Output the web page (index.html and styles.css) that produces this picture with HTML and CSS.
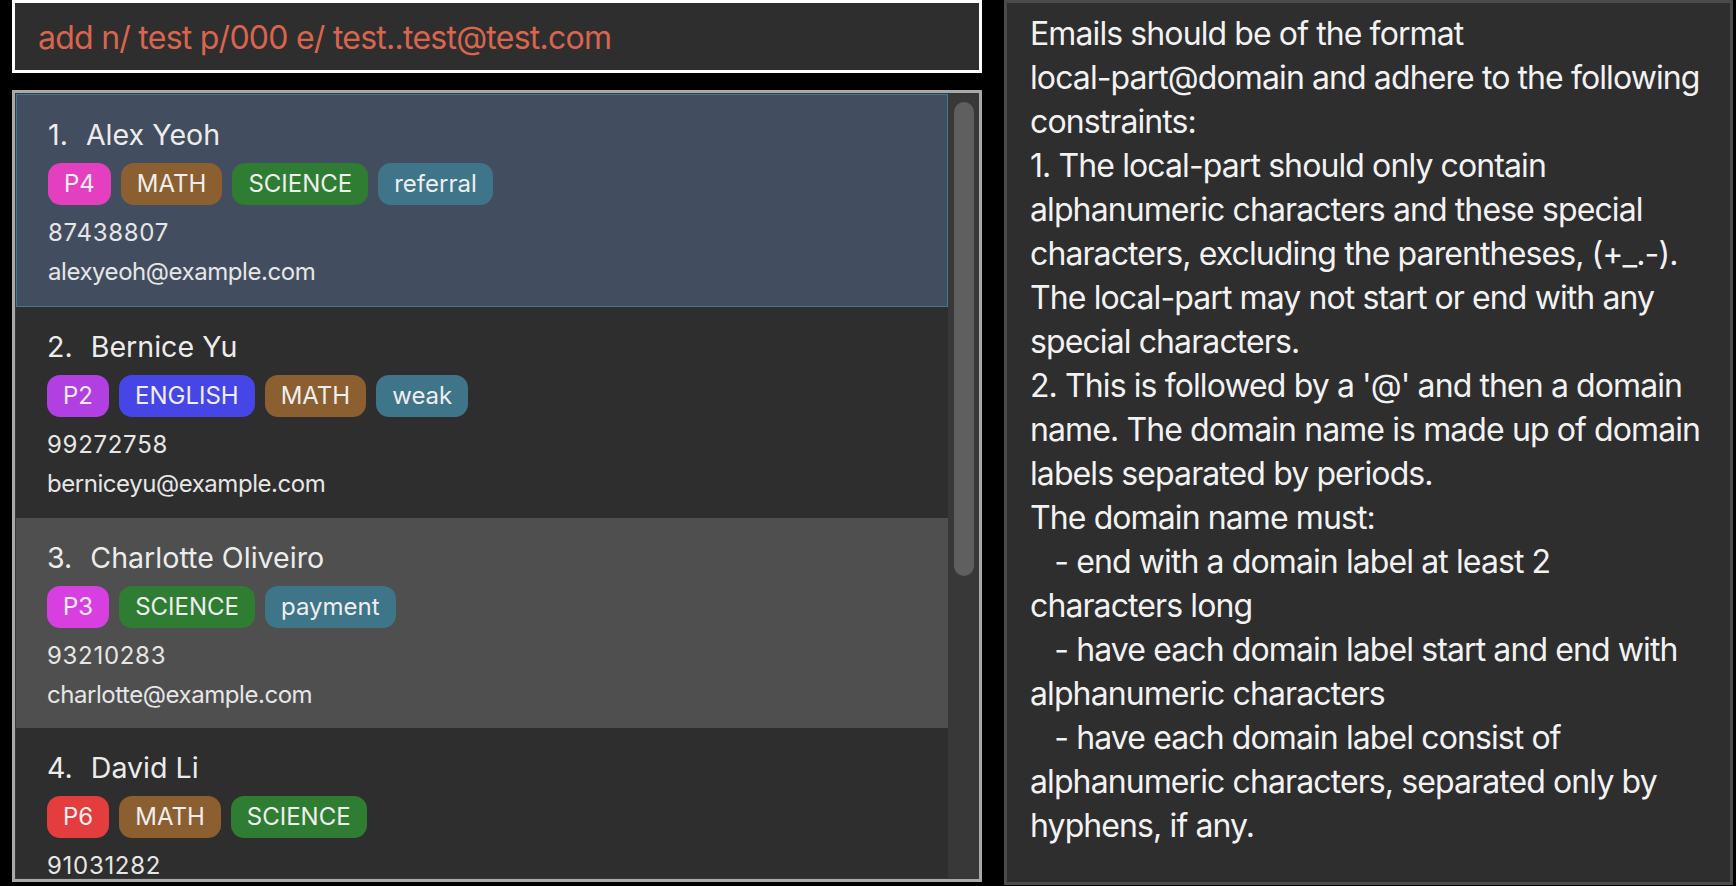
FILE: index.html
```html
<!DOCTYPE html>
<html lang="en">
<head>
<meta charset="utf-8">
<title>Address Book</title>
<link rel="stylesheet" href="styles.css">
</head>
<body>
<div class="app">
  <div class="left">
    <div class="command-box">
      <span class="command-text">add n/ test p/000 e/ test..test@test.com</span>
    </div>
    <div class="list-panel">
      <div class="list">
        <div class="cell selected">
          <div class="name"><span class="idx">1.</span>Alex Yeoh</div>
          <div class="tags">
            <span class="tag t-p4">P4</span>
            <span class="tag t-math">MATH</span>
            <span class="tag t-science">SCIENCE</span>
            <span class="tag t-note">referral</span>
          </div>
          <div class="line phone">87438807</div>
          <div class="line email">alexyeoh@example.com</div>
        </div>
        <div class="cell">
          <div class="name"><span class="idx">2.</span>Bernice Yu</div>
          <div class="tags">
            <span class="tag t-p2">P2</span>
            <span class="tag t-english">ENGLISH</span>
            <span class="tag t-math">MATH</span>
            <span class="tag t-note">weak</span>
          </div>
          <div class="line phone">99272758</div>
          <div class="line email">berniceyu@example.com</div>
        </div>
        <div class="cell hover">
          <div class="name"><span class="idx">3.</span>Charlotte Oliveiro</div>
          <div class="tags">
            <span class="tag t-p3">P3</span>
            <span class="tag t-science">SCIENCE</span>
            <span class="tag t-note">payment</span>
          </div>
          <div class="line phone">93210283</div>
          <div class="line email">charlotte@example.com</div>
        </div>
        <div class="cell">
          <div class="name"><span class="idx">4.</span>David Li</div>
          <div class="tags">
            <span class="tag t-p6">P6</span>
            <span class="tag t-math">MATH</span>
            <span class="tag t-science">SCIENCE</span>
          </div>
          <div class="line phone">91031282</div>
        </div>
      </div>
      <div class="scroll-track"><div class="scroll-thumb"></div></div>
    </div>
  </div>
  <div class="result-panel">
<p class="result-text">Emails should be of the format
local-part@domain and adhere to the following
constraints:
1. The local-part should only contain
alphanumeric characters and these special
characters, excluding the parentheses, (+_.-).
The local-part may not start or end with any
special characters.
2. This is followed by a '@' and then a domain
name. The domain name is made up of domain
labels separated by periods.
The domain name must:
   - end with a domain label at least 2
characters long
   - have each domain label start and end with
alphanumeric characters
   - have each domain label consist of
alphanumeric characters, separated only by
hyphens, if any.</p>
  </div>
</div>
</body>
</html>
```

FILE: styles.css
```css
* {
  box-sizing: border-box;
}

html, body {
  margin: 0;
  padding: 0;
  background: #000;
  height: 886px;
  overflow: hidden;
}

body {
  font-family: Inter, "Noto Sans", sans-serif;
  color: #ececec;
}

.app {
  display: flex;
  padding-left: 12px;
  gap: 22px;
  height: 886px;
}

.left {
  width: 970px;
  display: flex;
  flex-direction: column;
  gap: 17px;
}

.command-box {
  height: 73px;
  border: 3px solid #ffffff;
  background: #2e2e2e;
  display: flex;
  align-items: center;
  padding-left: 23px;
}

.command-text {
  font-size: 32px;
  letter-spacing: -0.75px;
  color: #d9654f;
  padding-top: 2px;
}

.list-panel {
  height: 792px;
  border: 3px solid #a9a9a9;
  padding: 1px;
  background: #383838;
  display: flex;
  overflow: hidden;
}

.list {
  width: 932px;
  display: flex;
  flex-direction: column;
  overflow: hidden;
  background: #2e2e2e;
}

.cell {
  flex: none;
  background: #2e2e2e;
  padding: 20px 20px 15px 31px;
}

.cell.selected {
  background: #424e60;
  border: 1px solid #3d7a8f;
}

.cell.hover {
  background: #4f4f4f;
  padding-bottom: 14px;
}

.name {
  font-size: 28.6px;
  line-height: 40px;
  height: 40px;
  white-space: nowrap;
  color: #ececec;
}

.idx {
  margin-right: 18px;
}

.tags {
  display: flex;
  gap: 10px;
  margin: 8px 0;
  height: 42px;
}

.tag {
  height: 42px;
  line-height: 42px;
  padding: 0 16px;
  border-radius: 13px;
  font-size: 24px;
  color: #eeeeee;
}

.t-p4 { background: #e33fc0; }
.t-p2 { background: #b13fe1; }
.t-p3 { background: #d73fe1; }
.t-p6 { background: #e33d3d; }
.t-math { background: #8b5f30; }
.t-science { background: #2e7d32; }
.t-english { background: #4646e6; }
.t-note { background: #3e7589; }

.line {
  font-size: 24px;
  line-height: 39px;
  height: 39px;
  color: #e6e6e6;
  white-space: nowrap;
}

.phone {
  letter-spacing: 0.7px;
}

.email {
  letter-spacing: -0.45px;
}

.scroll-track {
  width: 30px;
  flex: none;
  background: #383838;
  padding: 8px 4px 0 6px;
}

.scroll-thumb {
  width: 20px;
  height: 474px;
  border-radius: 10px;
  background: #5f5f5f;
}

.result-panel {
  width: 729px;
  height: 885px;
  border: 3px solid #4b4b4b;
  background: #2e2e2e;
  padding: 9px 10px 0 23px;
  overflow: hidden;
}

.result-text {
  margin: 0;
  white-space: pre;
  font-size: 32px;
  line-height: 44px;
  letter-spacing: -0.9px;
  color: #f2f2f2;
}
```
